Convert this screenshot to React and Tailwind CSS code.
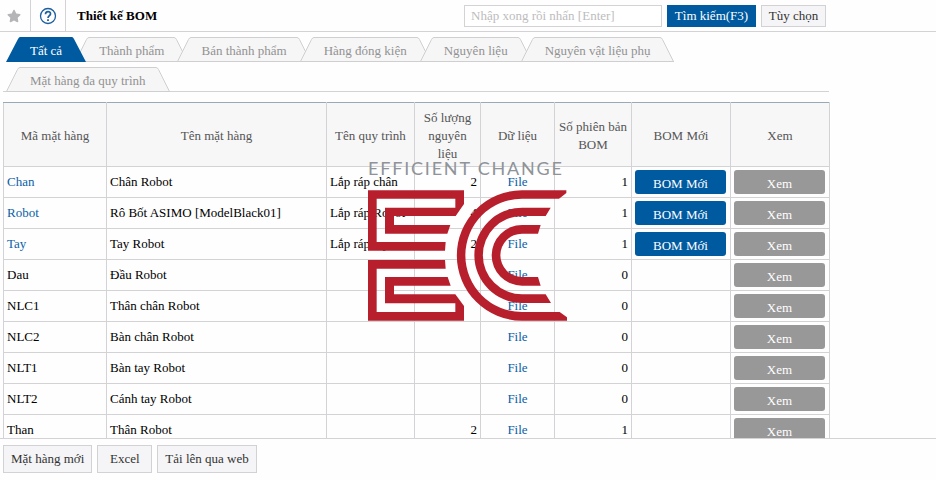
import { useState } from "react";
import { FaStar } from "react-icons/fa";

const TABS = [
  "Tất cả",
  "Thành phẩm",
  "Bán thành phẩm",
  "Hàng đóng kiện",
  "Nguyên liệu",
  "Nguyên vật liệu phụ",
];

const ROWS = [
  { code: "Chan", name: "Chân Robot", process: "Lắp ráp chân", qty: 2, version: 1, linked: true },
  { code: "Robot", name: "Rô Bốt ASIMO [ModelBlack01]", process: "Lắp ráp Robot", qty: 4, version: 1, linked: true },
  { code: "Tay", name: "Tay Robot", process: "Lắp ráp tay", qty: 2, version: 1, linked: true },
  { code: "Dau", name: "Đầu Robot", version: 0 },
  { code: "NLC1", name: "Thân chân Robot", version: 0 },
  { code: "NLC2", name: "Bàn chân Robot", version: 0 },
  { code: "NLT1", name: "Bàn tay Robot", version: 0 },
  { code: "NLT2", name: "Cánh tay Robot", version: 0 },
  { code: "Than", name: "Thân Robot", qty: 2, version: 1 },
];

function Tab({ label, active, onClick }) {
  return (
    <button
      type="button"
      role="tab"
      aria-selected={active}
      onClick={onClick}
      className={`relative -mr-[11px] flex h-[25px] ${
        active ? "z-10 text-white" : "text-[#929292]"
      }`}
    >
      <svg width="14" height="25" viewBox="0 0 14 25" className="shrink-0">
        <path d="M0 25 L12 2 Q13 0 14 0 V25 Z" fill={active ? "#005a9f" : "#f6f6f7"} />
        {!active && <path d="M0.5 24.5 L11.5 2.5 Q12.5 0.5 14 0.5 M0 24.5 H14" fill="none" stroke="#cfcfd1" />}
      </svg>
      <span
        className={`flex h-full items-center border-y px-2.5 pt-0.5 leading-4 ${
          active ? "border-[#005a9f] bg-[#005a9f]" : "border-[#cfcfd1] bg-[#f6f6f7]"
        }`}
      >
        {label}
      </span>
      <svg width="14" height="25" viewBox="0 0 14 25" className="shrink-0">
        <path d="M14 25 L2 2 Q1 0 0 0 V25 Z" fill={active ? "#005a9f" : "#f6f6f7"} />
        {!active && <path d="M13.5 24.5 L2.5 2.5 Q1.5 0.5 0 0.5 M0 24.5 H14" fill="none" stroke="#cfcfd1" />}
      </svg>
    </button>
  );
}

function PlainButton({ children, className }) {
  return (
    <button
      type="button"
      className={`border border-[#d2d2d4] bg-[#f5f5f7] text-[#333] hover:bg-gray-200 ${className}`}
    >
      {children}
    </button>
  );
}

function Watermark() {
  return (
    <div className="pointer-events-none absolute left-[368px] top-[66px] w-[204px]">
      <p className="whitespace-nowrap font-['Lato'] text-lg leading-5 tracking-widest text-[#8f9398]">
        EFFICIENT CHANGE
      </p>
      <svg
        width="199"
        height="131"
        viewBox="39 118 597 393"
        className="mt-3"
        fill="#b81f2d"
      >
        <path d="M39 119H327V160L302 196H117V223H286L277 249H90V171H301V144H65V274H272L270 300H39Z" />
        <path d="M39 328H270L272 354H65V484H301V458H90V379H278L287 405H117V431H301L327 466V510H39Z" />
        <path d="M634 119H501A195.500 195.500 0 0 0 501 510H636V500L614 484H501A170 170 0 0 1 501 144H612L634 127Z" />
        <path d="M587 171H501A143 143 0 0 0 501 457H588L572 431H501A117 117 0 0 1 501 196H572Z" />
        <path d="M557 223H501A91 91 0 0 0 501 405H557L549 379H501A65 65 0 0 1 501 249H549Z" />
      </svg>
    </div>
  );
}

function BomTable() {
  return (
    <table className="w-[827px] table-fixed border-collapse">
      <colgroup>
        <col className="w-[103px]" />
        <col className="w-[220px]" />
        <col className="w-[88px]" />
        <col className="w-[66px]" />
        <col className="w-[74px]" />
        <col className="w-[77px]" />
        <col className="w-[99px]" />
        <col className="w-[99px]" />
      </colgroup>
      <thead>
        <tr className="h-16 bg-[#f7f7f8] leading-[18px] text-[#555] *:border *:border-[#d3d3d5] *:border-t-[#9aa9b8] *:px-[3px] *:pb-0 *:pt-0.5 *:font-normal">
          <th>Mã mặt hàng</th>
          <th>Tên mặt hàng</th>
          <th>Tên quy trình</th>
          <th>Số lượng nguyên liệu</th>
          <th>Dữ liệu</th>
          <th>Số phiên bản BOM</th>
          <th>BOM Mới</th>
          <th>Xem</th>
        </tr>
      </thead>
      <tbody>
        {ROWS.map((row) => (
          <tr key={row.code} className="h-[31px] leading-4 *:border *:border-[#d3d3d5] *:px-[3px] *:py-0">
            <td>
              {row.linked ? (
                <a href="#item" className="text-[#0b5fa8]">{row.code}</a>
              ) : (
                row.code
              )}
            </td>
            <td>{row.name}</td>
            <td className="whitespace-nowrap">{row.process}</td>
            <td className="text-right">{row.qty}</td>
            <td className="text-center">
              <a href="#file" className="text-[#0b5fa8]">File</a>
            </td>
            <td className="text-right">{row.version}</td>
            <td>
              {row.linked && (
                <button type="button" className="block h-6 w-[91px] rounded-[3px] bg-[#005a9f] pt-1 text-white">
                  BOM Mới
                </button>
              )}
            </td>
            <td>
              <button type="button" className="block h-6 w-[91px] rounded-[3px] bg-[#989898] pt-1 text-white">
                Xem
              </button>
            </td>
          </tr>
        ))}
      </tbody>
    </table>
  );
}

export default function App() {
  const [tab, setTab] = useState("Tất cả");

  return (
    <div className="flex h-screen flex-col overflow-hidden bg-[#fefefe] font-['Liberation_Serif',serif] text-[13px] leading-4 text-black">
      {/* title bar */}
      <header className="h-8 shrink-0 border-b border-[#d3d3d5]">
        <div className="flex h-full max-w-[826px] items-center">
          <button type="button" aria-label="Yêu thích" className="flex h-full w-[30px] items-center pl-[7px] text-[#b5b5b7]">
            <FaStar size={14} />
          </button>
          <button
            type="button"
            aria-label="Trợ giúp"
            className="flex h-full w-9 items-center justify-center border-x border-[#d3d3d5]"
          >
            <svg width="18" height="18" viewBox="0 0 18 18" fill="none" stroke="#1d5f9f">
              <circle cx="9" cy="9" r="7.500" strokeWidth="1.300" />
              <path d="M6.500 7.200C6.500 3.700 11.700 3.900 11.500 6.900C11.400 8.600 9 8.700 9 11" strokeWidth="1.700" />
              <path d="M9 12.200V14" strokeWidth="1.800" />
            </svg>
          </button>
          <h1 className="pl-[11px] font-bold">Thiết kế BOM</h1>
          <div className="ml-auto flex gap-[5px]">
            <input
              type="text"
              aria-label="Tìm kiếm"
              placeholder="Nhập xong rồi nhấn [Enter]"
              className="h-[22px] w-[198px] border border-[#d3d3d5] bg-white px-1.5 placeholder:text-[#bcbcbe]"
            />
            <button type="button" className="h-[22px] w-[89px] bg-[#005a9f] text-white">
              Tìm kiếm(F3)
            </button>
            <PlainButton className="h-[22px] w-[65px]">Tùy chọn</PlainButton>
          </div>
        </div>
      </header>

      {/* category tabs */}
      <nav role="tablist" className="shrink-0 pt-[5px]">
        <div className="flex pl-1.5">
          {TABS.map((label) => (
            <Tab key={label} label={label} active={tab === label} onClick={() => setTab(label)} />
          ))}
        </div>
        <div className="ml-[3px] mt-[5px] flex max-w-[826px] border-b border-[#d3d3d5] pl-[3px]">
          <div className="-mb-px">
            <Tab
              label="Mặt hàng đa quy trình"
              active={tab === "multi"}
              onClick={() => setTab("multi")}
            />
          </div>
        </div>
      </nav>

      {/* item list */}
      <main className="relative min-h-0 flex-1 overflow-hidden pl-[3px] pt-2.5">
        <BomTable />
        <Watermark />
      </main>

      <footer className="flex h-[42px] shrink-0 gap-[5px] border-t border-[#d3d3d5] pl-[3px] pt-1.5">
        <PlainButton className="h-7 px-[7px]">Mặt hàng mới</PlainButton>
        <PlainButton className="h-7 w-[55px]">Excel</PlainButton>
        <PlainButton className="h-7 px-[7px]">Tải lên qua web</PlainButton>
      </footer>
    </div>
  );
}
